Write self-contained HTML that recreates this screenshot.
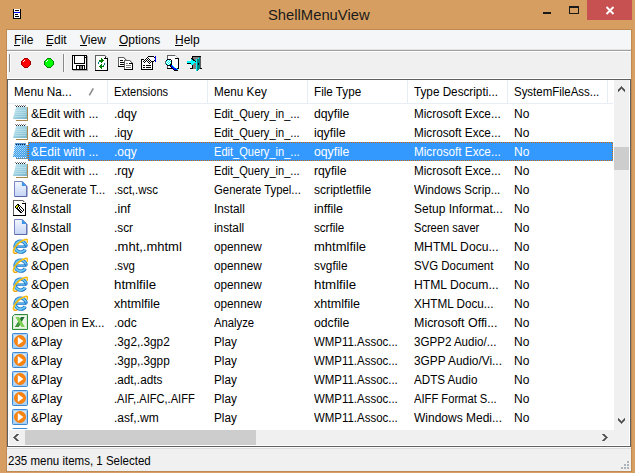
<!DOCTYPE html><html><head><meta charset="utf-8"><style>
*{margin:0;padding:0;box-sizing:border-box}
html,body{width:635px;height:473px;overflow:hidden;background:#D69F61;font-family:"Liberation Sans",sans-serif;font-size:12px;color:#000}
.a{position:absolute}
.t{position:absolute;white-space:pre;line-height:19px;height:19px;transform-origin:0 0}
svg{position:absolute;overflow:visible}
</style></head><body>

<div class="a" style="left:6px;top:29px;width:626px;height:443px;border:1px solid #BF8B52"></div>
<div class="a" style="left:268px;top:5px;font-size:15px;line-height:20px;color:#1a1a1a;white-space:pre;transform:scaleX(0.985);transform-origin:0 0">ShellMenuView</div>
<div class="a" style="left:543px;top:12px;width:8px;height:2px;background:#1a1a1a"></div>
<div class="a" style="left:569px;top:6px;width:10px;height:8px;border:1px solid #1a1a1a;border-top-width:2px"></div>
<div class="a" style="left:587px;top:0px;width:45px;height:20px;background:#C75050"></div>
<svg class="a" style="left:605px;top:6px" width="10" height="9"><path d="M1.5 1 L8.5 8 M8.5 1 L1.5 8" stroke="#fff" stroke-width="1.9"/></svg>
<div class="a" style="left:7px;top:30px;width:624px;height:441px;background:#F0F0F0"></div>
<div class="a" style="left:7px;top:30px;width:624px;height:19px;background:#F5F6F7"></div>
<div class="a" style="left:7px;top:49px;width:624px;height:1px;background:#E3E3E3"></div>
<div class="a" style="left:7px;top:50px;width:624px;height:1px;background:#A0A0A0"></div>
<div class="a" style="left:7px;top:51px;width:624px;height:1px;background:#FFFFFF"></div>
<span class="t" style="left:14px;top:31px;line-height:19px">File</span>
<div class="a" style="left:14px;top:45px;width:6px;height:1px;background:#000"></div>
<span class="t" style="left:46px;top:31px;line-height:19px">Edit</span>
<div class="a" style="left:46px;top:45px;width:6px;height:1px;background:#000"></div>
<span class="t" style="left:80px;top:31px;line-height:19px">View</span>
<div class="a" style="left:80px;top:45px;width:7px;height:1px;background:#000"></div>
<span class="t" style="left:119px;top:31px;line-height:19px">Options</span>
<div class="a" style="left:119px;top:45px;width:8px;height:1px;background:#000"></div>
<span class="t" style="left:175px;top:31px;line-height:19px">Help</span>
<div class="a" style="left:175px;top:45px;width:8px;height:1px;background:#000"></div>
<div class="a" style="left:7px;top:78px;width:624px;height:1px;background:#FFFFFF"></div>
<div class="a" style="left:7px;top:51px;width:1px;height:28px;background:#FFFFFF"></div>
<div class="a" style="left:9px;top:54px;width:1px;height:18px;background:#8A8A8A"></div>
<div class="a" style="left:10px;top:54px;width:1px;height:18px;background:#FAFAFA"></div>
<div class="a" style="left:63px;top:54px;width:1px;height:18px;background:#8A8A8A"></div>
<div class="a" style="left:64px;top:54px;width:1px;height:18px;background:#FAFAFA"></div>
<svg class="a" style="left:0;top:0" width="635" height="473" shape-rendering="crispEdges"><rect x="13" y="9" width="1" height="1" fill="#000000"/><rect x="14" y="9" width="6" height="1" fill="#FFFFFF"/><rect x="20" y="9" width="1" height="1" fill="#000000"/><rect x="13" y="10" width="1" height="1" fill="#000000"/><rect x="14" y="10" width="1" height="1" fill="#FFFFFF"/><rect x="15" y="10" width="4" height="1" fill="#000000"/><rect x="19" y="10" width="1" height="1" fill="#FFFFFF"/><rect x="20" y="10" width="1" height="1" fill="#000000"/><rect x="13" y="11" width="1" height="1" fill="#000000"/><rect x="14" y="11" width="6" height="1" fill="#FFFFFF"/><rect x="20" y="11" width="1" height="1" fill="#000000"/><rect x="13" y="12" width="1" height="1" fill="#000000"/><rect x="14" y="12" width="6" height="1" fill="#0000FF"/><rect x="20" y="12" width="1" height="1" fill="#000000"/><rect x="13" y="13" width="1" height="1" fill="#000000"/><rect x="14" y="13" width="6" height="1" fill="#FFFFFF"/><rect x="20" y="13" width="1" height="1" fill="#000000"/><rect x="13" y="14" width="1" height="1" fill="#000000"/><rect x="14" y="14" width="1" height="1" fill="#FFFFFF"/><rect x="15" y="14" width="3" height="1" fill="#000000"/><rect x="18" y="14" width="2" height="1" fill="#FFFFFF"/><rect x="20" y="14" width="1" height="1" fill="#000000"/><rect x="13" y="15" width="1" height="1" fill="#000000"/><rect x="14" y="15" width="6" height="1" fill="#FFFFFF"/><rect x="20" y="15" width="1" height="1" fill="#000000"/><rect x="13" y="16" width="1" height="1" fill="#000000"/><rect x="14" y="16" width="1" height="1" fill="#FFFFFF"/><rect x="15" y="16" width="4" height="1" fill="#000000"/><rect x="19" y="16" width="1" height="1" fill="#FFFFFF"/><rect x="20" y="16" width="1" height="1" fill="#000000"/><rect x="13" y="17" width="1" height="1" fill="#000000"/><rect x="14" y="17" width="6" height="1" fill="#FFFFFF"/><rect x="20" y="17" width="1" height="1" fill="#000000"/><rect x="13" y="18" width="8" height="1" fill="#000000"/><rect x="24" y="58" width="4" height="1" fill="#A00000"/><rect x="23" y="59" width="1" height="1" fill="#A00000"/><rect x="24" y="59" width="4" height="1" fill="#FF0000"/><rect x="28" y="59" width="1" height="1" fill="#A00000"/><rect x="22" y="60" width="1" height="1" fill="#A00000"/><rect x="23" y="60" width="1" height="1" fill="#FF0000"/><rect x="24" y="60" width="1" height="1" fill="#FFFFFF"/><rect x="25" y="60" width="4" height="1" fill="#FF0000"/><rect x="29" y="60" width="1" height="1" fill="#A00000"/><rect x="21" y="61" width="1" height="1" fill="#A00000"/><rect x="22" y="61" width="1" height="1" fill="#FF0000"/><rect x="23" y="61" width="1" height="1" fill="#FFFFFF"/><rect x="24" y="61" width="6" height="1" fill="#FF0000"/><rect x="30" y="61" width="1" height="1" fill="#A00000"/><rect x="21" y="62" width="1" height="1" fill="#A00000"/><rect x="22" y="62" width="8" height="1" fill="#FF0000"/><rect x="30" y="62" width="1" height="1" fill="#A00000"/><rect x="21" y="63" width="1" height="1" fill="#A00000"/><rect x="22" y="63" width="8" height="1" fill="#FF0000"/><rect x="30" y="63" width="1" height="1" fill="#A00000"/><rect x="21" y="64" width="1" height="1" fill="#A00000"/><rect x="22" y="64" width="8" height="1" fill="#FF0000"/><rect x="30" y="64" width="1" height="1" fill="#A00000"/><rect x="22" y="65" width="1" height="1" fill="#A00000"/><rect x="23" y="65" width="6" height="1" fill="#FF0000"/><rect x="29" y="65" width="1" height="1" fill="#A00000"/><rect x="23" y="66" width="1" height="1" fill="#A00000"/><rect x="24" y="66" width="4" height="1" fill="#FF0000"/><rect x="28" y="66" width="1" height="1" fill="#A00000"/><rect x="24" y="67" width="4" height="1" fill="#A00000"/><rect x="47" y="58" width="4" height="1" fill="#008000"/><rect x="46" y="59" width="1" height="1" fill="#008000"/><rect x="47" y="59" width="4" height="1" fill="#00FF00"/><rect x="51" y="59" width="1" height="1" fill="#008000"/><rect x="45" y="60" width="1" height="1" fill="#008000"/><rect x="46" y="60" width="1" height="1" fill="#00FF00"/><rect x="47" y="60" width="1" height="1" fill="#FFFFFF"/><rect x="48" y="60" width="4" height="1" fill="#00FF00"/><rect x="52" y="60" width="1" height="1" fill="#008000"/><rect x="44" y="61" width="1" height="1" fill="#008000"/><rect x="45" y="61" width="1" height="1" fill="#00FF00"/><rect x="46" y="61" width="1" height="1" fill="#FFFFFF"/><rect x="47" y="61" width="6" height="1" fill="#00FF00"/><rect x="53" y="61" width="1" height="1" fill="#008000"/><rect x="44" y="62" width="1" height="1" fill="#008000"/><rect x="45" y="62" width="8" height="1" fill="#00FF00"/><rect x="53" y="62" width="1" height="1" fill="#008000"/><rect x="44" y="63" width="1" height="1" fill="#008000"/><rect x="45" y="63" width="8" height="1" fill="#00FF00"/><rect x="53" y="63" width="1" height="1" fill="#008000"/><rect x="44" y="64" width="1" height="1" fill="#008000"/><rect x="45" y="64" width="8" height="1" fill="#00FF00"/><rect x="53" y="64" width="1" height="1" fill="#008000"/><rect x="45" y="65" width="1" height="1" fill="#008000"/><rect x="46" y="65" width="6" height="1" fill="#00FF00"/><rect x="52" y="65" width="1" height="1" fill="#008000"/><rect x="46" y="66" width="1" height="1" fill="#008000"/><rect x="47" y="66" width="4" height="1" fill="#00FF00"/><rect x="51" y="66" width="1" height="1" fill="#008000"/><rect x="47" y="67" width="4" height="1" fill="#008000"/><rect x="72" y="55" width="15" height="1" fill="#000000"/><rect x="72" y="56" width="1" height="1" fill="#000000"/><rect x="73" y="56" width="1" height="1" fill="#FFFFFF"/><rect x="74" y="56" width="1" height="1" fill="#000000"/><rect x="75" y="56" width="9" height="1" fill="#FFFFFF"/><rect x="84" y="56" width="1" height="1" fill="#000000"/><rect x="85" y="56" width="1" height="1" fill="#FFFFFF"/><rect x="86" y="56" width="1" height="1" fill="#000000"/><rect x="87" y="56" width="1" height="1" fill="#A8A8A8"/><rect x="72" y="57" width="1" height="1" fill="#000000"/><rect x="73" y="57" width="1" height="1" fill="#FFFFFF"/><rect x="74" y="57" width="1" height="1" fill="#000000"/><rect x="75" y="57" width="9" height="1" fill="#FFFFFF"/><rect x="84" y="57" width="3" height="1" fill="#000000"/><rect x="87" y="57" width="1" height="1" fill="#A8A8A8"/><rect x="72" y="58" width="1" height="1" fill="#000000"/><rect x="73" y="58" width="1" height="1" fill="#FFFFFF"/><rect x="74" y="58" width="1" height="1" fill="#000000"/><rect x="75" y="58" width="9" height="1" fill="#FFFFFF"/><rect x="84" y="58" width="1" height="1" fill="#000000"/><rect x="85" y="58" width="1" height="1" fill="#FFFFFF"/><rect x="86" y="58" width="1" height="1" fill="#000000"/><rect x="87" y="58" width="1" height="1" fill="#A8A8A8"/><rect x="72" y="59" width="1" height="1" fill="#000000"/><rect x="73" y="59" width="1" height="1" fill="#FFFFFF"/><rect x="74" y="59" width="1" height="1" fill="#000000"/><rect x="75" y="59" width="9" height="1" fill="#FFFFFF"/><rect x="84" y="59" width="1" height="1" fill="#000000"/><rect x="85" y="59" width="1" height="1" fill="#FFFFFF"/><rect x="86" y="59" width="1" height="1" fill="#000000"/><rect x="87" y="59" width="1" height="1" fill="#A8A8A8"/><rect x="72" y="60" width="1" height="1" fill="#000000"/><rect x="73" y="60" width="1" height="1" fill="#FFFFFF"/><rect x="74" y="60" width="1" height="1" fill="#000000"/><rect x="75" y="60" width="9" height="1" fill="#FFFFFF"/><rect x="84" y="60" width="1" height="1" fill="#000000"/><rect x="85" y="60" width="1" height="1" fill="#FFFFFF"/><rect x="86" y="60" width="1" height="1" fill="#000000"/><rect x="87" y="60" width="1" height="1" fill="#A8A8A8"/><rect x="72" y="61" width="1" height="1" fill="#000000"/><rect x="73" y="61" width="1" height="1" fill="#FFFFFF"/><rect x="74" y="61" width="1" height="1" fill="#000000"/><rect x="75" y="61" width="9" height="1" fill="#FFFFFF"/><rect x="84" y="61" width="1" height="1" fill="#000000"/><rect x="85" y="61" width="1" height="1" fill="#FFFFFF"/><rect x="86" y="61" width="1" height="1" fill="#000000"/><rect x="87" y="61" width="1" height="1" fill="#A8A8A8"/><rect x="72" y="62" width="1" height="1" fill="#000000"/><rect x="73" y="62" width="1" height="1" fill="#FFFFFF"/><rect x="74" y="62" width="1" height="1" fill="#000000"/><rect x="75" y="62" width="9" height="1" fill="#FFFFFF"/><rect x="84" y="62" width="1" height="1" fill="#000000"/><rect x="85" y="62" width="1" height="1" fill="#FFFFFF"/><rect x="86" y="62" width="1" height="1" fill="#000000"/><rect x="87" y="62" width="1" height="1" fill="#A8A8A8"/><rect x="72" y="63" width="1" height="1" fill="#000000"/><rect x="73" y="63" width="1" height="1" fill="#FFFFFF"/><rect x="74" y="63" width="11" height="1" fill="#000000"/><rect x="85" y="63" width="1" height="1" fill="#FFFFFF"/><rect x="86" y="63" width="1" height="1" fill="#000000"/><rect x="87" y="63" width="1" height="1" fill="#A8A8A8"/><rect x="72" y="64" width="1" height="1" fill="#000000"/><rect x="73" y="64" width="13" height="1" fill="#FFFFFF"/><rect x="86" y="64" width="1" height="1" fill="#000000"/><rect x="87" y="64" width="1" height="1" fill="#A8A8A8"/><rect x="72" y="65" width="1" height="1" fill="#000000"/><rect x="73" y="65" width="3" height="1" fill="#FFFFFF"/><rect x="76" y="65" width="9" height="1" fill="#000000"/><rect x="85" y="65" width="1" height="1" fill="#FFFFFF"/><rect x="86" y="65" width="1" height="1" fill="#000000"/><rect x="87" y="65" width="1" height="1" fill="#A8A8A8"/><rect x="72" y="66" width="1" height="1" fill="#000000"/><rect x="73" y="66" width="3" height="1" fill="#FFFFFF"/><rect x="76" y="66" width="1" height="1" fill="#000000"/><rect x="77" y="66" width="2" height="1" fill="#FFFFFF"/><rect x="79" y="66" width="1" height="1" fill="#000000"/><rect x="80" y="66" width="2" height="1" fill="#808080"/><rect x="82" y="66" width="1" height="1" fill="#000000"/><rect x="83" y="66" width="1" height="1" fill="#FFFFFF"/><rect x="84" y="66" width="1" height="1" fill="#000000"/><rect x="85" y="66" width="1" height="1" fill="#FFFFFF"/><rect x="86" y="66" width="1" height="1" fill="#000000"/><rect x="87" y="66" width="1" height="1" fill="#A8A8A8"/><rect x="72" y="67" width="1" height="1" fill="#000000"/><rect x="73" y="67" width="3" height="1" fill="#FFFFFF"/><rect x="76" y="67" width="1" height="1" fill="#000000"/><rect x="77" y="67" width="2" height="1" fill="#FFFFFF"/><rect x="79" y="67" width="1" height="1" fill="#000000"/><rect x="80" y="67" width="2" height="1" fill="#808080"/><rect x="82" y="67" width="1" height="1" fill="#000000"/><rect x="83" y="67" width="1" height="1" fill="#FFFFFF"/><rect x="84" y="67" width="1" height="1" fill="#000000"/><rect x="85" y="67" width="1" height="1" fill="#FFFFFF"/><rect x="86" y="67" width="1" height="1" fill="#000000"/><rect x="87" y="67" width="1" height="1" fill="#A8A8A8"/><rect x="72" y="68" width="1" height="1" fill="#000000"/><rect x="73" y="68" width="3" height="1" fill="#FFFFFF"/><rect x="76" y="68" width="1" height="1" fill="#000000"/><rect x="77" y="68" width="2" height="1" fill="#FFFFFF"/><rect x="79" y="68" width="1" height="1" fill="#000000"/><rect x="80" y="68" width="2" height="1" fill="#808080"/><rect x="82" y="68" width="1" height="1" fill="#000000"/><rect x="83" y="68" width="1" height="1" fill="#FFFFFF"/><rect x="84" y="68" width="1" height="1" fill="#000000"/><rect x="85" y="68" width="1" height="1" fill="#FFFFFF"/><rect x="86" y="68" width="1" height="1" fill="#000000"/><rect x="87" y="68" width="1" height="1" fill="#A8A8A8"/><rect x="72" y="69" width="15" height="1" fill="#000000"/><rect x="87" y="69" width="1" height="1" fill="#A8A8A8"/><rect x="73" y="70" width="15" height="1" fill="#A8A8A8"/><rect x="95" y="55" width="10" height="1" fill="#606060"/><rect x="105" y="55" width="1" height="1" fill="#C0C0C0"/><rect x="95" y="56" width="1" height="1" fill="#606060"/><rect x="96" y="56" width="9" height="1" fill="#FFFFFF"/><rect x="105" y="56" width="1" height="1" fill="#606060"/><rect x="106" y="56" width="1" height="1" fill="#C0C0C0"/><rect x="95" y="57" width="1" height="1" fill="#606060"/><rect x="96" y="57" width="9" height="1" fill="#FFFFFF"/><rect x="105" y="57" width="1" height="1" fill="#000000"/><rect x="106" y="57" width="1" height="1" fill="#FFFFFF"/><rect x="107" y="57" width="1" height="1" fill="#C0C0C0"/><rect x="95" y="58" width="1" height="1" fill="#606060"/><rect x="96" y="58" width="5" height="1" fill="#FFFFFF"/><rect x="101" y="58" width="1" height="1" fill="#008000"/><rect x="102" y="58" width="2" height="1" fill="#FFFFFF"/><rect x="104" y="58" width="4" height="1" fill="#000000"/><rect x="95" y="59" width="1" height="1" fill="#606060"/><rect x="96" y="59" width="5" height="1" fill="#FFFFFF"/><rect x="101" y="59" width="2" height="1" fill="#008000"/><rect x="103" y="59" width="4" height="1" fill="#FFFFFF"/><rect x="107" y="59" width="1" height="1" fill="#000000"/><rect x="95" y="60" width="1" height="1" fill="#606060"/><rect x="96" y="60" width="3" height="1" fill="#FFFFFF"/><rect x="99" y="60" width="5" height="1" fill="#008000"/><rect x="104" y="60" width="3" height="1" fill="#FFFFFF"/><rect x="107" y="60" width="1" height="1" fill="#000000"/><rect x="95" y="61" width="1" height="1" fill="#606060"/><rect x="96" y="61" width="3" height="1" fill="#FFFFFF"/><rect x="99" y="61" width="1" height="1" fill="#008080"/><rect x="100" y="61" width="3" height="1" fill="#008000"/><rect x="103" y="61" width="4" height="1" fill="#FFFFFF"/><rect x="107" y="61" width="1" height="1" fill="#000000"/><rect x="95" y="62" width="1" height="1" fill="#606060"/><rect x="96" y="62" width="2" height="1" fill="#FFFFFF"/><rect x="98" y="62" width="1" height="1" fill="#008080"/><rect x="99" y="62" width="2" height="1" fill="#FFFFFF"/><rect x="101" y="62" width="1" height="1" fill="#008000"/><rect x="102" y="62" width="5" height="1" fill="#FFFFFF"/><rect x="107" y="62" width="1" height="1" fill="#000000"/><rect x="95" y="63" width="1" height="1" fill="#606060"/><rect x="96" y="63" width="2" height="1" fill="#FFFFFF"/><rect x="98" y="63" width="1" height="1" fill="#008080"/><rect x="99" y="63" width="5" height="1" fill="#FFFFFF"/><rect x="104" y="63" width="1" height="1" fill="#008080"/><rect x="105" y="63" width="2" height="1" fill="#FFFFFF"/><rect x="107" y="63" width="1" height="1" fill="#000000"/><rect x="95" y="64" width="1" height="1" fill="#606060"/><rect x="96" y="64" width="5" height="1" fill="#FFFFFF"/><rect x="101" y="64" width="1" height="1" fill="#008000"/><rect x="102" y="64" width="2" height="1" fill="#FFFFFF"/><rect x="104" y="64" width="1" height="1" fill="#008080"/><rect x="105" y="64" width="2" height="1" fill="#FFFFFF"/><rect x="107" y="64" width="1" height="1" fill="#000000"/><rect x="95" y="65" width="1" height="1" fill="#606060"/><rect x="96" y="65" width="4" height="1" fill="#FFFFFF"/><rect x="100" y="65" width="2" height="1" fill="#008000"/><rect x="102" y="65" width="1" height="1" fill="#FFFFFF"/><rect x="103" y="65" width="1" height="1" fill="#008080"/><rect x="104" y="65" width="3" height="1" fill="#FFFFFF"/><rect x="107" y="65" width="1" height="1" fill="#000000"/><rect x="95" y="66" width="1" height="1" fill="#606060"/><rect x="96" y="66" width="3" height="1" fill="#FFFFFF"/><rect x="99" y="66" width="5" height="1" fill="#008000"/><rect x="104" y="66" width="3" height="1" fill="#FFFFFF"/><rect x="107" y="66" width="1" height="1" fill="#000000"/><rect x="95" y="67" width="1" height="1" fill="#606060"/><rect x="96" y="67" width="4" height="1" fill="#FFFFFF"/><rect x="100" y="67" width="2" height="1" fill="#008000"/><rect x="102" y="67" width="5" height="1" fill="#FFFFFF"/><rect x="107" y="67" width="1" height="1" fill="#000000"/><rect x="95" y="68" width="1" height="1" fill="#606060"/><rect x="96" y="68" width="5" height="1" fill="#FFFFFF"/><rect x="101" y="68" width="1" height="1" fill="#008000"/><rect x="102" y="68" width="5" height="1" fill="#FFFFFF"/><rect x="107" y="68" width="1" height="1" fill="#000000"/><rect x="95" y="69" width="1" height="1" fill="#606060"/><rect x="96" y="69" width="11" height="1" fill="#FFFFFF"/><rect x="107" y="69" width="1" height="1" fill="#000000"/><rect x="95" y="70" width="13" height="1" fill="#000000"/><rect x="118" y="57" width="6" height="1" fill="#606060"/><rect x="124" y="57" width="1" height="1" fill="#C0C0C0"/><rect x="118" y="58" width="1" height="1" fill="#606060"/><rect x="119" y="58" width="5" height="1" fill="#FFFFFF"/><rect x="124" y="58" width="1" height="1" fill="#606060"/><rect x="125" y="58" width="1" height="1" fill="#C0C0C0"/><rect x="118" y="59" width="1" height="1" fill="#606060"/><rect x="119" y="59" width="6" height="1" fill="#FFFFFF"/><rect x="125" y="59" width="1" height="1" fill="#606060"/><rect x="126" y="59" width="1" height="1" fill="#C0C0C0"/><rect x="118" y="60" width="1" height="1" fill="#606060"/><rect x="119" y="60" width="1" height="1" fill="#FFFFFF"/><rect x="120" y="60" width="3" height="1" fill="#000000"/><rect x="123" y="60" width="1" height="1" fill="#FFFFFF"/><rect x="124" y="60" width="6" height="1" fill="#606060"/><rect x="130" y="60" width="1" height="1" fill="#C0C0C0"/><rect x="118" y="61" width="1" height="1" fill="#606060"/><rect x="119" y="61" width="5" height="1" fill="#FFFFFF"/><rect x="124" y="61" width="1" height="1" fill="#606060"/><rect x="125" y="61" width="5" height="1" fill="#FFFFFF"/><rect x="130" y="61" width="1" height="1" fill="#606060"/><rect x="131" y="61" width="1" height="1" fill="#C0C0C0"/><rect x="118" y="62" width="1" height="1" fill="#606060"/><rect x="119" y="62" width="1" height="1" fill="#FFFFFF"/><rect x="120" y="62" width="4" height="1" fill="#000000"/><rect x="124" y="62" width="1" height="1" fill="#606060"/><rect x="125" y="62" width="6" height="1" fill="#FFFFFF"/><rect x="131" y="62" width="1" height="1" fill="#606060"/><rect x="132" y="62" width="1" height="1" fill="#C0C0C0"/><rect x="118" y="63" width="1" height="1" fill="#606060"/><rect x="119" y="63" width="5" height="1" fill="#FFFFFF"/><rect x="124" y="63" width="1" height="1" fill="#606060"/><rect x="125" y="63" width="1" height="1" fill="#FFFFFF"/><rect x="126" y="63" width="2" height="1" fill="#808080"/><rect x="128" y="63" width="1" height="1" fill="#FFFFFF"/><rect x="129" y="63" width="4" height="1" fill="#000000"/><rect x="118" y="64" width="1" height="1" fill="#606060"/><rect x="119" y="64" width="1" height="1" fill="#FFFFFF"/><rect x="120" y="64" width="4" height="1" fill="#000000"/><rect x="124" y="64" width="1" height="1" fill="#606060"/><rect x="125" y="64" width="7" height="1" fill="#FFFFFF"/><rect x="132" y="64" width="1" height="1" fill="#000000"/><rect x="118" y="65" width="1" height="1" fill="#606060"/><rect x="119" y="65" width="5" height="1" fill="#FFFFFF"/><rect x="124" y="65" width="1" height="1" fill="#606060"/><rect x="125" y="65" width="1" height="1" fill="#FFFFFF"/><rect x="126" y="65" width="5" height="1" fill="#808080"/><rect x="131" y="65" width="1" height="1" fill="#FFFFFF"/><rect x="132" y="65" width="1" height="1" fill="#000000"/><rect x="118" y="66" width="6" height="1" fill="#000000"/><rect x="124" y="66" width="1" height="1" fill="#606060"/><rect x="125" y="66" width="7" height="1" fill="#FFFFFF"/><rect x="132" y="66" width="1" height="1" fill="#000000"/><rect x="124" y="67" width="1" height="1" fill="#606060"/><rect x="125" y="67" width="1" height="1" fill="#FFFFFF"/><rect x="126" y="67" width="5" height="1" fill="#808080"/><rect x="131" y="67" width="1" height="1" fill="#FFFFFF"/><rect x="132" y="67" width="1" height="1" fill="#000000"/><rect x="124" y="68" width="1" height="1" fill="#606060"/><rect x="125" y="68" width="7" height="1" fill="#FFFFFF"/><rect x="132" y="68" width="1" height="1" fill="#000000"/><rect x="124" y="69" width="9" height="1" fill="#000000"/><rect x="148" y="56" width="6" height="1" fill="#000000"/><rect x="155" y="56" width="1" height="1" fill="#0000FF"/><rect x="146" y="57" width="1" height="1" fill="#FFFFFF"/><rect x="147" y="57" width="1" height="1" fill="#000000"/><rect x="148" y="57" width="6" height="1" fill="#FFFFFF"/><rect x="154" y="57" width="1" height="1" fill="#000000"/><rect x="155" y="57" width="1" height="1" fill="#0000FF"/><rect x="145" y="58" width="1" height="1" fill="#FFFFFF"/><rect x="146" y="58" width="1" height="1" fill="#000000"/><rect x="147" y="58" width="1" height="1" fill="#FFFFFF"/><rect x="148" y="58" width="1" height="1" fill="#000000"/><rect x="149" y="58" width="5" height="1" fill="#FFFFFF"/><rect x="155" y="58" width="1" height="1" fill="#0000FF"/><rect x="141" y="59" width="3" height="1" fill="#000000"/><rect x="144" y="59" width="1" height="1" fill="#FFFFFF"/><rect x="145" y="59" width="1" height="1" fill="#000000"/><rect x="146" y="59" width="1" height="1" fill="#FFFFFF"/><rect x="147" y="59" width="1" height="1" fill="#000000"/><rect x="148" y="59" width="1" height="1" fill="#FFFFFF"/><rect x="149" y="59" width="1" height="1" fill="#000000"/><rect x="150" y="59" width="4" height="1" fill="#FFFFFF"/><rect x="155" y="59" width="1" height="1" fill="#0000FF"/><rect x="141" y="60" width="1" height="1" fill="#000000"/><rect x="142" y="60" width="2" height="1" fill="#FFFFFF"/><rect x="144" y="60" width="1" height="1" fill="#000000"/><rect x="145" y="60" width="1" height="1" fill="#FFFFFF"/><rect x="146" y="60" width="1" height="1" fill="#000000"/><rect x="147" y="60" width="1" height="1" fill="#FFFFFF"/><rect x="148" y="60" width="1" height="1" fill="#000000"/><rect x="149" y="60" width="1" height="1" fill="#FFFFFF"/><rect x="150" y="60" width="1" height="1" fill="#000000"/><rect x="151" y="60" width="3" height="1" fill="#FFFFFF"/><rect x="154" y="60" width="1" height="1" fill="#000000"/><rect x="155" y="60" width="1" height="1" fill="#0000FF"/><rect x="141" y="61" width="1" height="1" fill="#000000"/><rect x="142" y="61" width="1" height="1" fill="#FFFFFF"/><rect x="143" y="61" width="1" height="1" fill="#000000"/><rect x="144" y="61" width="1" height="1" fill="#FFFFFF"/><rect x="145" y="61" width="1" height="1" fill="#000000"/><rect x="146" y="61" width="1" height="1" fill="#FFFFFF"/><rect x="147" y="61" width="1" height="1" fill="#000000"/><rect x="148" y="61" width="1" height="1" fill="#FFFFFF"/><rect x="149" y="61" width="1" height="1" fill="#000000"/><rect x="150" y="61" width="1" height="1" fill="#FFFFFF"/><rect x="151" y="61" width="3" height="1" fill="#000000"/><rect x="155" y="61" width="1" height="1" fill="#0000FF"/><rect x="141" y="62" width="1" height="1" fill="#000000"/><rect x="142" y="62" width="2" height="1" fill="#FFFFFF"/><rect x="144" y="62" width="1" height="1" fill="#000000"/><rect x="145" y="62" width="3" height="1" fill="#FFFFFF"/><rect x="148" y="62" width="1" height="1" fill="#000000"/><rect x="149" y="62" width="1" height="1" fill="#FFFFFF"/><rect x="150" y="62" width="1" height="1" fill="#000000"/><rect x="151" y="62" width="1" height="1" fill="#FFFFFF"/><rect x="152" y="62" width="1" height="1" fill="#000000"/><rect x="141" y="63" width="1" height="1" fill="#000000"/><rect x="142" y="63" width="7" height="1" fill="#FFFFFF"/><rect x="149" y="63" width="1" height="1" fill="#000000"/><rect x="150" y="63" width="2" height="1" fill="#FFFFFF"/><rect x="152" y="63" width="1" height="1" fill="#000000"/><rect x="141" y="64" width="1" height="1" fill="#000000"/><rect x="142" y="64" width="10" height="1" fill="#FFFFFF"/><rect x="152" y="64" width="1" height="1" fill="#000000"/><rect x="141" y="65" width="1" height="1" fill="#000000"/><rect x="142" y="65" width="1" height="1" fill="#FFFFFF"/><rect x="143" y="65" width="2" height="1" fill="#000000"/><rect x="145" y="65" width="1" height="1" fill="#FFFFFF"/><rect x="146" y="65" width="5" height="1" fill="#000000"/><rect x="151" y="65" width="1" height="1" fill="#FFFFFF"/><rect x="152" y="65" width="1" height="1" fill="#000000"/><rect x="141" y="66" width="1" height="1" fill="#000000"/><rect x="142" y="66" width="10" height="1" fill="#FFFFFF"/><rect x="152" y="66" width="1" height="1" fill="#000000"/><rect x="141" y="67" width="1" height="1" fill="#000000"/><rect x="142" y="67" width="1" height="1" fill="#FFFFFF"/><rect x="143" y="67" width="2" height="1" fill="#000000"/><rect x="145" y="67" width="1" height="1" fill="#FFFFFF"/><rect x="146" y="67" width="5" height="1" fill="#000000"/><rect x="151" y="67" width="1" height="1" fill="#FFFFFF"/><rect x="152" y="67" width="1" height="1" fill="#000000"/><rect x="141" y="68" width="1" height="1" fill="#000000"/><rect x="142" y="68" width="10" height="1" fill="#FFFFFF"/><rect x="152" y="68" width="1" height="1" fill="#000000"/><rect x="141" y="69" width="12" height="1" fill="#000000"/><rect x="167" y="55" width="8" height="1" fill="#606060"/><rect x="175" y="55" width="1" height="1" fill="#C0C0C0"/><rect x="167" y="56" width="1" height="1" fill="#606060"/><rect x="168" y="56" width="8" height="1" fill="#FFFFFF"/><rect x="176" y="56" width="1" height="1" fill="#C0C0C0"/><rect x="167" y="57" width="1" height="1" fill="#606060"/><rect x="168" y="57" width="9" height="1" fill="#FFFFFF"/><rect x="177" y="57" width="1" height="1" fill="#C0C0C0"/><rect x="167" y="58" width="1" height="1" fill="#606060"/><rect x="168" y="58" width="7" height="1" fill="#FFFFFF"/><rect x="175" y="58" width="4" height="1" fill="#000000"/><rect x="167" y="59" width="4" height="1" fill="#000000"/><rect x="171" y="59" width="7" height="1" fill="#FFFFFF"/><rect x="178" y="59" width="1" height="1" fill="#000000"/><rect x="166" y="60" width="1" height="1" fill="#000000"/><rect x="167" y="60" width="1" height="1" fill="#00FFFF"/><rect x="168" y="60" width="1" height="1" fill="#FFFFFF"/><rect x="169" y="60" width="1" height="1" fill="#00FFFF"/><rect x="170" y="60" width="1" height="1" fill="#FFFFFF"/><rect x="171" y="60" width="1" height="1" fill="#000000"/><rect x="172" y="60" width="6" height="1" fill="#FFFFFF"/><rect x="178" y="60" width="1" height="1" fill="#000000"/><rect x="165" y="61" width="1" height="1" fill="#606060"/><rect x="166" y="61" width="1" height="1" fill="#00FFFF"/><rect x="167" y="61" width="1" height="1" fill="#FFFFFF"/><rect x="168" y="61" width="1" height="1" fill="#00FFFF"/><rect x="169" y="61" width="1" height="1" fill="#FFFFFF"/><rect x="170" y="61" width="1" height="1" fill="#00FFFF"/><rect x="171" y="61" width="1" height="1" fill="#000000"/><rect x="172" y="61" width="6" height="1" fill="#FFFFFF"/><rect x="178" y="61" width="1" height="1" fill="#000000"/><rect x="165" y="62" width="1" height="1" fill="#606060"/><rect x="166" y="62" width="1" height="1" fill="#FFFFFF"/><rect x="167" y="62" width="1" height="1" fill="#00FFFF"/><rect x="168" y="62" width="1" height="1" fill="#FFFFFF"/><rect x="169" y="62" width="1" height="1" fill="#00FFFF"/><rect x="170" y="62" width="1" height="1" fill="#FFFFFF"/><rect x="171" y="62" width="1" height="1" fill="#000000"/><rect x="172" y="62" width="6" height="1" fill="#FFFFFF"/><rect x="178" y="62" width="1" height="1" fill="#000000"/><rect x="165" y="63" width="1" height="1" fill="#606060"/><rect x="166" y="63" width="1" height="1" fill="#00FFFF"/><rect x="167" y="63" width="1" height="1" fill="#FFFFFF"/><rect x="168" y="63" width="1" height="1" fill="#00FFFF"/><rect x="169" y="63" width="1" height="1" fill="#FFFFFF"/><rect x="170" y="63" width="1" height="1" fill="#00FFFF"/><rect x="171" y="63" width="1" height="1" fill="#000000"/><rect x="172" y="63" width="6" height="1" fill="#FFFFFF"/><rect x="178" y="63" width="1" height="1" fill="#000000"/><rect x="166" y="64" width="1" height="1" fill="#000000"/><rect x="167" y="64" width="1" height="1" fill="#00FFFF"/><rect x="168" y="64" width="1" height="1" fill="#FFFFFF"/><rect x="169" y="64" width="1" height="1" fill="#00FFFF"/><rect x="170" y="64" width="2" height="1" fill="#000000"/><rect x="172" y="64" width="6" height="1" fill="#FFFFFF"/><rect x="178" y="64" width="1" height="1" fill="#000000"/><rect x="167" y="65" width="4" height="1" fill="#000000"/><rect x="171" y="65" width="1" height="1" fill="#0000FF"/><rect x="172" y="65" width="1" height="1" fill="#00FFFF"/><rect x="173" y="65" width="5" height="1" fill="#FFFFFF"/><rect x="178" y="65" width="1" height="1" fill="#000000"/><rect x="167" y="66" width="1" height="1" fill="#606060"/><rect x="168" y="66" width="2" height="1" fill="#FFFFFF"/><rect x="170" y="66" width="1" height="1" fill="#000000"/><rect x="171" y="66" width="2" height="1" fill="#0000FF"/><rect x="173" y="66" width="1" height="1" fill="#00FFFF"/><rect x="174" y="66" width="4" height="1" fill="#FFFFFF"/><rect x="178" y="66" width="1" height="1" fill="#000000"/><rect x="167" y="67" width="1" height="1" fill="#606060"/><rect x="168" y="67" width="3" height="1" fill="#FFFFFF"/><rect x="171" y="67" width="1" height="1" fill="#000000"/><rect x="172" y="67" width="2" height="1" fill="#0000FF"/><rect x="174" y="67" width="1" height="1" fill="#00FFFF"/><rect x="175" y="67" width="3" height="1" fill="#FFFFFF"/><rect x="178" y="67" width="1" height="1" fill="#000000"/><rect x="167" y="68" width="6" height="1" fill="#000000"/><rect x="173" y="68" width="3" height="1" fill="#0000FF"/><rect x="176" y="68" width="1" height="1" fill="#00FFFF"/><rect x="177" y="68" width="2" height="1" fill="#000000"/><rect x="173" y="69" width="1" height="1" fill="#000000"/><rect x="174" y="69" width="3" height="1" fill="#0000FF"/><rect x="177" y="69" width="1" height="1" fill="#00FFFF"/><rect x="174" y="70" width="4" height="1" fill="#000000"/><rect x="192" y="56" width="9" height="1" fill="#000000"/><rect x="192" y="57" width="1" height="1" fill="#000000"/><rect x="193" y="57" width="6" height="1" fill="#808080"/><rect x="199" y="57" width="1" height="1" fill="#008080"/><rect x="200" y="57" width="1" height="1" fill="#606060"/><rect x="191" y="58" width="2" height="1" fill="#000000"/><rect x="193" y="58" width="5" height="1" fill="#808080"/><rect x="198" y="58" width="1" height="1" fill="#00FFFF"/><rect x="199" y="58" width="1" height="1" fill="#008080"/><rect x="200" y="58" width="1" height="1" fill="#606060"/><rect x="191" y="59" width="1" height="1" fill="#00FFFF"/><rect x="192" y="59" width="2" height="1" fill="#000000"/><rect x="194" y="59" width="2" height="1" fill="#808080"/><rect x="196" y="59" width="1" height="1" fill="#00FFFF"/><rect x="197" y="59" width="3" height="1" fill="#008080"/><rect x="200" y="59" width="1" height="1" fill="#606060"/><rect x="191" y="60" width="2" height="1" fill="#00FFFF"/><rect x="193" y="60" width="2" height="1" fill="#000000"/><rect x="195" y="60" width="1" height="1" fill="#808080"/><rect x="196" y="60" width="1" height="1" fill="#00FFFF"/><rect x="197" y="60" width="3" height="1" fill="#008080"/><rect x="200" y="60" width="1" height="1" fill="#606060"/><rect x="187" y="61" width="8" height="1" fill="#00FFFF"/><rect x="195" y="61" width="1" height="1" fill="#000000"/><rect x="196" y="61" width="1" height="1" fill="#00FFFF"/><rect x="197" y="61" width="3" height="1" fill="#008080"/><rect x="200" y="61" width="1" height="1" fill="#606060"/><rect x="187" y="62" width="10" height="1" fill="#00FFFF"/><rect x="197" y="62" width="3" height="1" fill="#008080"/><rect x="200" y="62" width="1" height="1" fill="#606060"/><rect x="187" y="63" width="4" height="1" fill="#000000"/><rect x="191" y="63" width="3" height="1" fill="#00FFFF"/><rect x="194" y="63" width="2" height="1" fill="#808080"/><rect x="196" y="63" width="1" height="1" fill="#00FFFF"/><rect x="197" y="63" width="1" height="1" fill="#008080"/><rect x="198" y="63" width="1" height="1" fill="#000000"/><rect x="199" y="63" width="1" height="1" fill="#008080"/><rect x="200" y="63" width="1" height="1" fill="#606060"/><rect x="191" y="64" width="2" height="1" fill="#00FFFF"/><rect x="193" y="64" width="3" height="1" fill="#808080"/><rect x="196" y="64" width="1" height="1" fill="#00FFFF"/><rect x="197" y="64" width="1" height="1" fill="#008080"/><rect x="198" y="64" width="1" height="1" fill="#000000"/><rect x="199" y="64" width="1" height="1" fill="#008080"/><rect x="200" y="64" width="1" height="1" fill="#606060"/><rect x="192" y="65" width="1" height="1" fill="#000000"/><rect x="193" y="65" width="3" height="1" fill="#808080"/><rect x="196" y="65" width="1" height="1" fill="#00FFFF"/><rect x="197" y="65" width="3" height="1" fill="#008080"/><rect x="200" y="65" width="1" height="1" fill="#606060"/><rect x="192" y="66" width="1" height="1" fill="#000000"/><rect x="193" y="66" width="3" height="1" fill="#808080"/><rect x="196" y="66" width="1" height="1" fill="#00FFFF"/><rect x="197" y="66" width="3" height="1" fill="#008080"/><rect x="200" y="66" width="1" height="1" fill="#606060"/><rect x="192" y="67" width="1" height="1" fill="#000000"/><rect x="193" y="67" width="3" height="1" fill="#808080"/><rect x="196" y="67" width="1" height="1" fill="#00FFFF"/><rect x="197" y="67" width="3" height="1" fill="#008080"/><rect x="200" y="67" width="1" height="1" fill="#606060"/><rect x="190" y="68" width="3" height="1" fill="#000000"/><rect x="193" y="68" width="3" height="1" fill="#808080"/><rect x="196" y="68" width="1" height="1" fill="#00FFFF"/><rect x="197" y="68" width="3" height="1" fill="#008080"/><rect x="200" y="68" width="2" height="1" fill="#000000"/><rect x="196" y="69" width="1" height="1" fill="#00FFFF"/><rect x="197" y="69" width="2" height="1" fill="#008080"/><rect x="196" y="70" width="1" height="1" fill="#00FFFF"/><rect x="197" y="70" width="1" height="1" fill="#008080"/></svg>
<div class="a" style="left:7px;top:79px;width:624px;height:368px;border:1px solid #5F5F5F;background:#fff"></div>
<span class="t" style="left:14px;top:83px;transform:scaleX(0.9825);">Menu Na...</span>
<div class="a" style="left:107px;top:80px;width:1px;height:23px;background:#E8ECF5"></div>
<span class="t" style="left:114px;top:83px;transform:scaleX(0.9224);">Extensions</span>
<div class="a" style="left:207px;top:80px;width:1px;height:23px;background:#E8ECF5"></div>
<span class="t" style="left:214px;top:83px;transform:scaleX(0.9774);">Menu Key</span>
<div class="a" style="left:307px;top:80px;width:1px;height:23px;background:#E8ECF5"></div>
<span class="t" style="left:314px;top:83px;transform:scaleX(0.9723);">File Type</span>
<div class="a" style="left:407px;top:80px;width:1px;height:23px;background:#E8ECF5"></div>
<span class="t" style="left:414px;top:83px;transform:scaleX(0.9765);">Type Descripti...</span>
<div class="a" style="left:507px;top:80px;width:1px;height:23px;background:#E8ECF5"></div>
<span class="t" style="left:514px;top:83px;transform:scaleX(0.9545);">SystemFileAss...</span>
<div class="a" style="left:607px;top:80px;width:1px;height:23px;background:#E8ECF5"></div>
<div class="a" style="left:8px;top:103px;width:605px;height:1px;background:#E9EDF5"></div>
<svg class="a" style="left:88px;top:87px" width="8" height="10"><path d="M1.3 8.3 L5.3 1.3" stroke="#8c8c8c" stroke-width="1.6"/></svg>
<svg class="a" style="left:12px;top:105px" width="16" height="16"><use href="#i_np"/></svg>
<span class="t" style="left:31px;top:105px;transform:scaleX(1.0121);">&amp;Edit with ...</span>
<span class="t" style="left:114px;top:105px;">.dqy</span>
<span class="t" style="left:214px;top:105px;transform:scaleX(0.9231);">Edit_Query_in_...</span>
<span class="t" style="left:314px;top:105px;transform:scaleX(1.0200);">dqyfile</span>
<span class="t" style="left:414px;top:105px;transform:scaleX(0.9770);">Microsoft Exce...</span>
<span class="t" style="left:514px;top:105px;">No</span>
<svg class="a" style="left:12px;top:124px" width="16" height="16"><use href="#i_np"/></svg>
<span class="t" style="left:31px;top:124px;transform:scaleX(1.0121);">&amp;Edit with ...</span>
<span class="t" style="left:114px;top:124px;">.iqy</span>
<span class="t" style="left:214px;top:124px;transform:scaleX(0.9231);">Edit_Query_in_...</span>
<span class="t" style="left:314px;top:124px;transform:scaleX(1.0290);">iqyfile</span>
<span class="t" style="left:414px;top:124px;transform:scaleX(0.9770);">Microsoft Exce...</span>
<span class="t" style="left:514px;top:124px;">No</span>
<div class="a" style="left:28px;top:142px;width:585px;height:19px;background:#3399FF"></div>
<svg class="a" style="left:0;top:0" width="635" height="473" shape-rendering="crispEdges"><defs><pattern id="foc" width="2" height="2" patternUnits="userSpaceOnUse"><rect x="1" y="0" width="1" height="1" fill="#CC6600"/><rect x="0" y="1" width="1" height="1" fill="#CC6600"/></pattern></defs><rect x="28" y="142" width="585" height="1" fill="url(#foc)"/><rect x="28" y="160" width="585" height="1" fill="url(#foc)"/><rect x="28" y="142" width="1" height="19" fill="url(#foc)"/><rect x="612" y="142" width="1" height="19" fill="url(#foc)"/></svg>
<svg class="a" style="left:12px;top:143px" width="16" height="16"><use href="#i_np"/></svg>
<svg class="a" style="left:12px;top:143px" width="16" height="16"><path d="M3 0 H14 V2 H16 V16 H4 V14 H1 Z" fill="url(#dith)"/></svg>
<span class="t" style="left:31px;top:143px;transform:scaleX(1.0121); color:#fff;">&amp;Edit with ...</span>
<span class="t" style="left:114px;top:143px; color:#fff;">.oqy</span>
<span class="t" style="left:214px;top:143px;transform:scaleX(0.9231); color:#fff;">Edit_Query_in_...</span>
<span class="t" style="left:314px;top:143px;transform:scaleX(1.0200); color:#fff;">oqyfile</span>
<span class="t" style="left:414px;top:143px;transform:scaleX(0.9770); color:#fff;">Microsoft Exce...</span>
<span class="t" style="left:514px;top:143px; color:#fff;">No</span>
<svg class="a" style="left:12px;top:162px" width="16" height="16"><use href="#i_np"/></svg>
<span class="t" style="left:31px;top:162px;transform:scaleX(1.0121);">&amp;Edit with ...</span>
<span class="t" style="left:114px;top:162px;">.rqy</span>
<span class="t" style="left:214px;top:162px;transform:scaleX(0.9231);">Edit_Query_in_...</span>
<span class="t" style="left:314px;top:162px;transform:scaleX(1.0156);">rqyfile</span>
<span class="t" style="left:414px;top:162px;transform:scaleX(0.9770);">Microsoft Exce...</span>
<span class="t" style="left:514px;top:162px;">No</span>
<svg class="a" style="left:12px;top:181px" width="16" height="16"><use href="#i_doc"/></svg>
<span class="t" style="left:31px;top:181px;transform:scaleX(0.9605);">&amp;Generate T...</span>
<span class="t" style="left:114px;top:181px;transform:scaleX(0.9556);">.sct,.wsc</span>
<span class="t" style="left:214px;top:181px;transform:scaleX(0.9451);">Generate Typel...</span>
<span class="t" style="left:314px;top:181px;transform:scaleX(1.0088);">scriptletfile</span>
<span class="t" style="left:414px;top:181px;transform:scaleX(0.9663);">Windows Scrip...</span>
<span class="t" style="left:514px;top:181px;">No</span>
<svg class="a" style="left:12px;top:200px" width="16" height="16"><use href="#i_inf"/></svg>
<span class="t" style="left:31px;top:200px;transform:scaleX(1.0256);">&amp;Install</span>
<span class="t" style="left:114px;top:200px;transform:scaleX(1.0312);">.inf</span>
<span class="t" style="left:214px;top:200px;transform:scaleX(0.9833);">Install</span>
<span class="t" style="left:314px;top:200px;transform:scaleX(1.0464);">inffile</span>
<span class="t" style="left:414px;top:200px;">Setup Informat...</span>
<span class="t" style="left:514px;top:200px;">No</span>
<svg class="a" style="left:12px;top:219px" width="16" height="16"><use href="#i_doc"/></svg>
<span class="t" style="left:31px;top:219px;transform:scaleX(1.0256);">&amp;Install</span>
<span class="t" style="left:114px;top:219px;transform:scaleX(0.9833);">.scr</span>
<span class="t" style="left:214px;top:219px;transform:scaleX(0.9833);">install</span>
<span class="t" style="left:314px;top:219px;transform:scaleX(0.9677);">scrfile</span>
<span class="t" style="left:414px;top:219px;transform:scaleX(0.9229);">Screen saver</span>
<span class="t" style="left:514px;top:219px;">No</span>
<svg class="a" style="left:12px;top:238px" width="16" height="16"><use href="#i_ie"/></svg>
<span class="t" style="left:31px;top:238px;transform:scaleX(1.0189);">&amp;Open</span>
<span class="t" style="left:114px;top:238px;transform:scaleX(1.0820);">.mht,.mhtml</span>
<span class="t" style="left:214px;top:238px;transform:scaleX(0.9796);">opennew</span>
<span class="t" style="left:314px;top:238px;transform:scaleX(1.0851);">mhtmlfile</span>
<span class="t" style="left:414px;top:238px;transform:scaleX(1.0122);">MHTML Docu...</span>
<span class="t" style="left:514px;top:238px;">No</span>
<svg class="a" style="left:12px;top:257px" width="16" height="16"><use href="#i_ie"/></svg>
<span class="t" style="left:31px;top:257px;transform:scaleX(1.0189);">&amp;Open</span>
<span class="t" style="left:114px;top:257px;transform:scaleX(0.9524);">.svg</span>
<span class="t" style="left:214px;top:257px;transform:scaleX(0.9796);">opennew</span>
<span class="t" style="left:314px;top:257px;transform:scaleX(0.9853);">svgfile</span>
<span class="t" style="left:414px;top:257px;transform:scaleX(0.9518);">SVG Document</span>
<span class="t" style="left:514px;top:257px;">No</span>
<svg class="a" style="left:12px;top:276px" width="16" height="16"><use href="#i_ie"/></svg>
<span class="t" style="left:31px;top:276px;transform:scaleX(1.0189);">&amp;Open</span>
<span class="t" style="left:114px;top:276px;transform:scaleX(1.1081);">htmlfile</span>
<span class="t" style="left:214px;top:276px;transform:scaleX(0.9796);">opennew</span>
<span class="t" style="left:314px;top:276px;transform:scaleX(1.1081);">htmlfile</span>
<span class="t" style="left:414px;top:276px;transform:scaleX(1.0122);">HTML Docum...</span>
<span class="t" style="left:514px;top:276px;">No</span>
<svg class="a" style="left:12px;top:295px" width="16" height="16"><use href="#i_ie"/></svg>
<span class="t" style="left:31px;top:295px;transform:scaleX(1.0189);">&amp;Open</span>
<span class="t" style="left:114px;top:295px;transform:scaleX(1.0455);">xhtmlfile</span>
<span class="t" style="left:214px;top:295px;transform:scaleX(0.9796);">opennew</span>
<span class="t" style="left:314px;top:295px;transform:scaleX(1.0455);">xhtmlfile</span>
<span class="t" style="left:414px;top:295px;transform:scaleX(0.9753);">XHTML Docu...</span>
<span class="t" style="left:514px;top:295px;">No</span>
<svg class="a" style="left:12px;top:314px" width="16" height="16"><use href="#i_xl"/></svg>
<span class="t" style="left:31px;top:314px;transform:scaleX(0.9481);">&amp;Open in Ex...</span>
<span class="t" style="left:114px;top:314px;">.odc</span>
<span class="t" style="left:214px;top:314px;transform:scaleX(0.9395);">Analyze</span>
<span class="t" style="left:314px;top:314px;transform:scaleX(1.0200);">odcfile</span>
<span class="t" style="left:414px;top:314px;transform:scaleX(1.0380);">Microsoft Offi...</span>
<span class="t" style="left:514px;top:314px;">No</span>
<svg class="a" style="left:12px;top:333px" width="16" height="16"><use href="#i_wmp"/></svg>
<span class="t" style="left:31px;top:333px;">&amp;Play</span>
<span class="t" style="left:114px;top:333px;transform:scaleX(0.9818);">.3g2,.3gp2</span>
<span class="t" style="left:214px;top:333px;transform:scaleX(0.9773);">Play</span>
<span class="t" style="left:314px;top:333px;transform:scaleX(0.9540);">WMP11.Assoc...</span>
<span class="t" style="left:414px;top:333px;transform:scaleX(0.9647);">3GPP2 Audio/...</span>
<span class="t" style="left:514px;top:333px;">No</span>
<svg class="a" style="left:12px;top:352px" width="16" height="16"><use href="#i_wmp"/></svg>
<span class="t" style="left:31px;top:352px;">&amp;Play</span>
<span class="t" style="left:114px;top:352px;transform:scaleX(0.9821);">.3gp,.3gpp</span>
<span class="t" style="left:214px;top:352px;transform:scaleX(0.9773);">Play</span>
<span class="t" style="left:314px;top:352px;transform:scaleX(0.9540);">WMP11.Assoc...</span>
<span class="t" style="left:414px;top:352px;transform:scaleX(0.9886);">3GPP Audio/Vi...</span>
<span class="t" style="left:514px;top:352px;">No</span>
<svg class="a" style="left:12px;top:371px" width="16" height="16"><use href="#i_wmp"/></svg>
<span class="t" style="left:31px;top:371px;">&amp;Play</span>
<span class="t" style="left:114px;top:371px;transform:scaleX(0.9792);">.adt,.adts</span>
<span class="t" style="left:214px;top:371px;transform:scaleX(0.9773);">Play</span>
<span class="t" style="left:314px;top:371px;transform:scaleX(0.9540);">WMP11.Assoc...</span>
<span class="t" style="left:414px;top:371px;transform:scaleX(0.9692);">ADTS Audio</span>
<span class="t" style="left:514px;top:371px;">No</span>
<svg class="a" style="left:12px;top:390px" width="16" height="16"><use href="#i_wmp"/></svg>
<span class="t" style="left:31px;top:390px;">&amp;Play</span>
<span class="t" style="left:114px;top:390px;transform:scaleX(0.9244);">.AIF,.AIFC,.AIFF</span>
<span class="t" style="left:214px;top:390px;transform:scaleX(0.9773);">Play</span>
<span class="t" style="left:314px;top:390px;transform:scaleX(0.9540);">WMP11.Assoc...</span>
<span class="t" style="left:414px;top:390px;transform:scaleX(0.9318);">AIFF Format S...</span>
<span class="t" style="left:514px;top:390px;">No</span>
<svg class="a" style="left:12px;top:409px" width="16" height="16"><use href="#i_wmp"/></svg>
<span class="t" style="left:31px;top:409px;">&amp;Play</span>
<span class="t" style="left:114px;top:409px;">.asf,.wm</span>
<span class="t" style="left:214px;top:409px;transform:scaleX(0.9773);">Play</span>
<span class="t" style="left:314px;top:409px;transform:scaleX(0.9540);">WMP11.Assoc...</span>
<span class="t" style="left:414px;top:409px;">Windows Medi...</span>
<span class="t" style="left:514px;top:409px;">No</span>
<svg class="a" style="left:12px;top:428px" width="16" height="16"><use href="#i_wmp"/></svg>






<div class="a" style="left:613px;top:80px;width:17px;height:350px;background:#F0F0F0;border-left:1px solid #fff;border-right:1px solid #fff"></div>
<div class="a" style="left:614px;top:147px;width:15px;height:23px;background:#CDCDCD"></div>
<div class="a" style="left:8px;top:429px;width:606px;height:17px;background:#F0F0F0;border-top:1px solid #fff;border-bottom:1px solid #fff;border-left:1px solid #fff"></div>
<div class="a" style="left:614px;top:430px;width:16px;height:16px;background:#F0F0F0;border-right:1px solid #fff;border-bottom:1px solid #fff"></div>
<div class="a" style="left:25px;top:430px;width:231px;height:15px;background:#CDCDCD"></div>
<svg class="a" style="left:0;top:0" width="635" height="473" shape-rendering="crispEdges"><rect x="16" y="434" width="1" height="1" fill="#747474"/><rect x="17" y="434" width="1" height="1" fill="#484848"/><rect x="18" y="434" width="1" height="1" fill="#747474"/><rect x="15" y="435" width="1" height="1" fill="#747474"/><rect x="16" y="435" width="1" height="1" fill="#484848"/><rect x="17" y="435" width="1" height="1" fill="#747474"/><rect x="14" y="436" width="1" height="1" fill="#747474"/><rect x="15" y="436" width="1" height="1" fill="#484848"/><rect x="16" y="436" width="1" height="1" fill="#747474"/><rect x="13" y="437" width="1" height="1" fill="#747474"/><rect x="14" y="437" width="1" height="1" fill="#484848"/><rect x="15" y="437" width="1" height="1" fill="#747474"/><rect x="14" y="438" width="1" height="1" fill="#747474"/><rect x="15" y="438" width="1" height="1" fill="#484848"/><rect x="16" y="438" width="1" height="1" fill="#747474"/><rect x="15" y="439" width="1" height="1" fill="#747474"/><rect x="16" y="439" width="1" height="1" fill="#484848"/><rect x="17" y="439" width="1" height="1" fill="#747474"/><rect x="16" y="440" width="1" height="1" fill="#747474"/><rect x="17" y="440" width="1" height="1" fill="#484848"/><rect x="18" y="440" width="1" height="1" fill="#747474"/><rect x="602" y="434" width="1" height="1" fill="#747474"/><rect x="603" y="434" width="1" height="1" fill="#484848"/><rect x="604" y="434" width="1" height="1" fill="#747474"/><rect x="603" y="435" width="1" height="1" fill="#747474"/><rect x="604" y="435" width="1" height="1" fill="#484848"/><rect x="605" y="435" width="1" height="1" fill="#747474"/><rect x="604" y="436" width="1" height="1" fill="#747474"/><rect x="605" y="436" width="1" height="1" fill="#484848"/><rect x="606" y="436" width="1" height="1" fill="#747474"/><rect x="605" y="437" width="1" height="1" fill="#747474"/><rect x="606" y="437" width="1" height="1" fill="#484848"/><rect x="607" y="437" width="1" height="1" fill="#747474"/><rect x="604" y="438" width="1" height="1" fill="#747474"/><rect x="605" y="438" width="1" height="1" fill="#484848"/><rect x="606" y="438" width="1" height="1" fill="#747474"/><rect x="603" y="439" width="1" height="1" fill="#747474"/><rect x="604" y="439" width="1" height="1" fill="#484848"/><rect x="605" y="439" width="1" height="1" fill="#747474"/><rect x="602" y="440" width="1" height="1" fill="#747474"/><rect x="603" y="440" width="1" height="1" fill="#484848"/><rect x="604" y="440" width="1" height="1" fill="#747474"/><rect x="618" y="89" width="1" height="1" fill="#747474"/><rect x="618" y="90" width="1" height="1" fill="#484848"/><rect x="618" y="91" width="1" height="1" fill="#747474"/><rect x="619" y="88" width="1" height="1" fill="#747474"/><rect x="619" y="89" width="1" height="1" fill="#484848"/><rect x="619" y="90" width="1" height="1" fill="#747474"/><rect x="620" y="87" width="1" height="1" fill="#747474"/><rect x="620" y="88" width="1" height="1" fill="#484848"/><rect x="620" y="89" width="1" height="1" fill="#747474"/><rect x="621" y="86" width="1" height="1" fill="#747474"/><rect x="621" y="87" width="1" height="1" fill="#484848"/><rect x="621" y="88" width="1" height="1" fill="#747474"/><rect x="622" y="87" width="1" height="1" fill="#747474"/><rect x="622" y="88" width="1" height="1" fill="#484848"/><rect x="622" y="89" width="1" height="1" fill="#747474"/><rect x="623" y="88" width="1" height="1" fill="#747474"/><rect x="623" y="89" width="1" height="1" fill="#484848"/><rect x="623" y="90" width="1" height="1" fill="#747474"/><rect x="624" y="89" width="1" height="1" fill="#747474"/><rect x="624" y="90" width="1" height="1" fill="#484848"/><rect x="624" y="91" width="1" height="1" fill="#747474"/><rect x="618" y="418" width="1" height="1" fill="#747474"/><rect x="618" y="419" width="1" height="1" fill="#484848"/><rect x="618" y="420" width="1" height="1" fill="#747474"/><rect x="619" y="419" width="1" height="1" fill="#747474"/><rect x="619" y="420" width="1" height="1" fill="#484848"/><rect x="619" y="421" width="1" height="1" fill="#747474"/><rect x="620" y="420" width="1" height="1" fill="#747474"/><rect x="620" y="421" width="1" height="1" fill="#484848"/><rect x="620" y="422" width="1" height="1" fill="#747474"/><rect x="621" y="421" width="1" height="1" fill="#747474"/><rect x="621" y="422" width="1" height="1" fill="#484848"/><rect x="621" y="423" width="1" height="1" fill="#747474"/><rect x="622" y="420" width="1" height="1" fill="#747474"/><rect x="622" y="421" width="1" height="1" fill="#484848"/><rect x="622" y="422" width="1" height="1" fill="#747474"/><rect x="623" y="419" width="1" height="1" fill="#747474"/><rect x="623" y="420" width="1" height="1" fill="#484848"/><rect x="623" y="421" width="1" height="1" fill="#747474"/><rect x="624" y="418" width="1" height="1" fill="#747474"/><rect x="624" y="419" width="1" height="1" fill="#484848"/><rect x="624" y="420" width="1" height="1" fill="#747474"/><rect x="627" y="461" width="1" height="1" fill="#AEB4BA"/><rect x="628" y="461" width="1" height="1" fill="#AEB4BA"/><rect x="627" y="462" width="1" height="1" fill="#AEB4BA"/><rect x="628" y="462" width="1" height="1" fill="#AEB4BA"/><rect x="624" y="464" width="1" height="1" fill="#AEB4BA"/><rect x="625" y="464" width="1" height="1" fill="#AEB4BA"/><rect x="624" y="465" width="1" height="1" fill="#AEB4BA"/><rect x="625" y="465" width="1" height="1" fill="#AEB4BA"/><rect x="627" y="464" width="1" height="1" fill="#AEB4BA"/><rect x="628" y="464" width="1" height="1" fill="#AEB4BA"/><rect x="627" y="465" width="1" height="1" fill="#AEB4BA"/><rect x="628" y="465" width="1" height="1" fill="#AEB4BA"/><rect x="621" y="467" width="1" height="1" fill="#AEB4BA"/><rect x="622" y="467" width="1" height="1" fill="#AEB4BA"/><rect x="621" y="468" width="1" height="1" fill="#AEB4BA"/><rect x="622" y="468" width="1" height="1" fill="#AEB4BA"/><rect x="624" y="467" width="1" height="1" fill="#AEB4BA"/><rect x="625" y="467" width="1" height="1" fill="#AEB4BA"/><rect x="624" y="468" width="1" height="1" fill="#AEB4BA"/><rect x="625" y="468" width="1" height="1" fill="#AEB4BA"/><rect x="627" y="467" width="1" height="1" fill="#AEB4BA"/><rect x="628" y="467" width="1" height="1" fill="#AEB4BA"/><rect x="627" y="468" width="1" height="1" fill="#AEB4BA"/><rect x="628" y="468" width="1" height="1" fill="#AEB4BA"/></svg>
<div class="a" style="left:7px;top:79px;width:624px;height:368px;border:1px solid #5F5F5F"></div>
<div class="a" style="left:7px;top:447px;width:624px;height:1px;background:#FAFAFA"></div>
<div class="a" style="left:7px;top:448px;width:624px;height:1px;background:#DDDDDD"></div>
<span class="t" style="left:8px;top:452px;transform:scaleX(0.9595);">235 menu items, 1 Selected</span>
<svg width="0" height="0" style="position:absolute">
<defs>
<linearGradient id="gnp" x1="0" y1="0" x2="1" y2="1"><stop offset="0" stop-color="#C4E8F2"/><stop offset="0.5" stop-color="#9CD0E0"/><stop offset="1" stop-color="#78B4C8"/></linearGradient>
<linearGradient id="gdoc" x1="0" y1="0" x2="0" y2="1"><stop offset="0" stop-color="#F4F8FF"/><stop offset="1" stop-color="#C4D4F4"/></linearGradient>
<linearGradient id="gxl" x1="0" y1="0" x2="1" y2="1"><stop offset="0" stop-color="#9ADB6A"/><stop offset="1" stop-color="#1F7A2E"/></linearGradient>
<linearGradient id="gwmp" x1="0" y1="0" x2="0" y2="1"><stop offset="0" stop-color="#D8ECFC"/><stop offset="1" stop-color="#A8D0F4"/></linearGradient>
<linearGradient id="gie" x1="0" y1="0" x2="1" y2="1"><stop offset="0" stop-color="#2E8EE0"/><stop offset="0.45" stop-color="#66CCF4"/><stop offset="1" stop-color="#1E70C8"/></linearGradient>
<pattern id="dith" width="2" height="2" patternUnits="userSpaceOnUse"><rect x="0" y="0" width="1" height="1" fill="#3399FF"/><rect x="1" y="1" width="1" height="1" fill="#3399FF"/></pattern>
<symbol id="i_np" viewBox="0 0 16 16" shape-rendering="crispEdges">
 <rect x="4" y="2" width="12" height="14" fill="#fff"/>
 <rect x="15" y="2" width="1" height="14" fill="#A8884E"/>
 <rect x="4" y="15" width="12" height="1" fill="#A8884E"/>
 <path d="M4 2 H15 V14 H1 Z" fill="url(#gnp)" shape-rendering="auto"/>
 <rect x="3" y="5" width="11" height="1" fill="#C8E8F0" opacity="0.6"/>
 <rect x="3" y="7" width="11" height="1" fill="#C8E8F0" opacity="0.6"/>
 <rect x="2" y="9" width="12" height="1" fill="#C8E8F0" opacity="0.6"/>
 <rect x="2" y="11" width="12" height="1" fill="#C8E8F0" opacity="0.6"/>
 <rect x="3" y="0" width="1" height="1" fill="#8A9096"/><rect x="5" y="0" width="1" height="1" fill="#8A9096"/><rect x="7" y="0" width="1" height="1" fill="#8A9096"/><rect x="9" y="0" width="1" height="1" fill="#8A9096"/><rect x="11" y="0" width="1" height="1" fill="#8A9096"/><rect x="13" y="0" width="1" height="1" fill="#8A9096"/>
 <rect x="4" y="1" width="1" height="1" fill="#1E242A"/><rect x="6" y="1" width="1" height="1" fill="#1E242A"/><rect x="8" y="1" width="1" height="1" fill="#1E242A"/><rect x="10" y="1" width="1" height="1" fill="#1E242A"/><rect x="12" y="1" width="1" height="1" fill="#1E242A"/>
</symbol>
<symbol id="i_doc" viewBox="0 0 16 16">
 <path d="M2.5 0.5 H10.5 L14.5 4.5 V15.5 H2.5 Z" fill="url(#gdoc)" stroke="#7886C8" stroke-width="1"/>
 <path d="M10.5 1 V4.5 H14" fill="#3A96E8" stroke="#3A96E8" stroke-width="1.2"/>
 <path d="M3 15.5 H15 M15 5 V15.5" stroke="#5A68A8" stroke-width="1"/>
</symbol>
<symbol id="i_inf" viewBox="0 0 16 16" shape-rendering="crispEdges"><rect x="1" y="0" width="10" height="1" fill="#606060"/><rect x="11" y="0" width="1" height="1" fill="#C0C0C0"/><rect x="1" y="1" width="1" height="1" fill="#606060"/><rect x="2" y="1" width="9" height="1" fill="#FFFFFF"/><rect x="11" y="1" width="1" height="1" fill="#606060"/><rect x="12" y="1" width="1" height="1" fill="#C0C0C0"/><rect x="1" y="2" width="1" height="1" fill="#606060"/><rect x="2" y="2" width="11" height="1" fill="#FFFFFF"/><rect x="13" y="2" width="1" height="1" fill="#C0C0C0"/><rect x="1" y="3" width="1" height="1" fill="#606060"/><rect x="2" y="3" width="8" height="1" fill="#FFFFFF"/><rect x="10" y="3" width="4" height="1" fill="#000000"/><rect x="1" y="4" width="1" height="1" fill="#606060"/><rect x="2" y="4" width="3" height="1" fill="#FFFFFF"/><rect x="5" y="4" width="2" height="1" fill="#000000"/><rect x="7" y="4" width="6" height="1" fill="#FFFFFF"/><rect x="13" y="4" width="1" height="1" fill="#000000"/><rect x="1" y="5" width="1" height="1" fill="#606060"/><rect x="2" y="5" width="2" height="1" fill="#FFFFFF"/><rect x="4" y="5" width="1" height="1" fill="#000000"/><rect x="5" y="5" width="1" height="1" fill="#E8E800"/><rect x="6" y="5" width="2" height="1" fill="#000000"/><rect x="8" y="5" width="5" height="1" fill="#FFFFFF"/><rect x="13" y="5" width="1" height="1" fill="#000000"/><rect x="1" y="6" width="1" height="1" fill="#606060"/><rect x="2" y="6" width="1" height="1" fill="#FFFFFF"/><rect x="3" y="6" width="1" height="1" fill="#000000"/><rect x="4" y="6" width="2" height="1" fill="#E8E800"/><rect x="6" y="6" width="1" height="1" fill="#000000"/><rect x="7" y="6" width="1" height="1" fill="#FFFFFF"/><rect x="8" y="6" width="1" height="1" fill="#000000"/><rect x="9" y="6" width="4" height="1" fill="#FFFFFF"/><rect x="13" y="6" width="1" height="1" fill="#000000"/><rect x="1" y="7" width="1" height="1" fill="#606060"/><rect x="2" y="7" width="1" height="1" fill="#FFFFFF"/><rect x="3" y="7" width="1" height="1" fill="#000000"/><rect x="4" y="7" width="1" height="1" fill="#E8E800"/><rect x="5" y="7" width="1" height="1" fill="#000000"/><rect x="6" y="7" width="1" height="1" fill="#FFFFFF"/><rect x="7" y="7" width="1" height="1" fill="#000000"/><rect x="8" y="7" width="1" height="1" fill="#FFFFFF"/><rect x="9" y="7" width="1" height="1" fill="#000000"/><rect x="10" y="7" width="3" height="1" fill="#FFFFFF"/><rect x="13" y="7" width="1" height="1" fill="#000000"/><rect x="1" y="8" width="1" height="1" fill="#606060"/><rect x="2" y="8" width="2" height="1" fill="#FFFFFF"/><rect x="4" y="8" width="2" height="1" fill="#000000"/><rect x="6" y="8" width="1" height="1" fill="#FFFFFF"/><rect x="7" y="8" width="1" height="1" fill="#000000"/><rect x="8" y="8" width="2" height="1" fill="#FFFFFF"/><rect x="10" y="8" width="1" height="1" fill="#000000"/><rect x="11" y="8" width="2" height="1" fill="#FFFFFF"/><rect x="13" y="8" width="1" height="1" fill="#000000"/><rect x="1" y="9" width="1" height="1" fill="#606060"/><rect x="2" y="9" width="3" height="1" fill="#FFFFFF"/><rect x="5" y="9" width="2" height="1" fill="#000000"/><rect x="7" y="9" width="1" height="1" fill="#FFFFFF"/><rect x="8" y="9" width="1" height="1" fill="#000000"/><rect x="9" y="9" width="2" height="1" fill="#FFFFFF"/><rect x="11" y="9" width="1" height="1" fill="#000000"/><rect x="12" y="9" width="1" height="1" fill="#FFFFFF"/><rect x="13" y="9" width="1" height="1" fill="#000000"/><rect x="1" y="10" width="1" height="1" fill="#606060"/><rect x="2" y="10" width="4" height="1" fill="#FFFFFF"/><rect x="6" y="10" width="2" height="1" fill="#000000"/><rect x="8" y="10" width="1" height="1" fill="#FFFFFF"/><rect x="9" y="10" width="1" height="1" fill="#000000"/><rect x="10" y="10" width="1" height="1" fill="#FFFFFF"/><rect x="11" y="10" width="1" height="1" fill="#000000"/><rect x="12" y="10" width="1" height="1" fill="#FFFFFF"/><rect x="13" y="10" width="1" height="1" fill="#000000"/><rect x="1" y="11" width="1" height="1" fill="#606060"/><rect x="2" y="11" width="5" height="1" fill="#FFFFFF"/><rect x="7" y="11" width="2" height="1" fill="#000000"/><rect x="9" y="11" width="1" height="1" fill="#FFFFFF"/><rect x="10" y="11" width="1" height="1" fill="#000000"/><rect x="11" y="11" width="2" height="1" fill="#FFFFFF"/><rect x="13" y="11" width="1" height="1" fill="#000000"/><rect x="1" y="12" width="1" height="1" fill="#606060"/><rect x="2" y="12" width="6" height="1" fill="#FFFFFF"/><rect x="8" y="12" width="2" height="1" fill="#000000"/><rect x="10" y="12" width="3" height="1" fill="#FFFFFF"/><rect x="13" y="12" width="1" height="1" fill="#000000"/><rect x="1" y="13" width="1" height="1" fill="#606060"/><rect x="2" y="13" width="11" height="1" fill="#FFFFFF"/><rect x="13" y="13" width="1" height="1" fill="#000000"/><rect x="1" y="14" width="1" height="1" fill="#606060"/><rect x="2" y="14" width="11" height="1" fill="#FFFFFF"/><rect x="13" y="14" width="1" height="1" fill="#000000"/><rect x="1" y="15" width="13" height="1" fill="#000000"/></symbol>
<symbol id="i_ie" viewBox="0 0 16 16">
 <path d="M14.1 8.6 A5.5 5.5 0 1 0 13.3 11.5" fill="none" stroke="#1E74C8" stroke-width="3.4"/>
 <path d="M14.1 8.6 A5.5 5.5 0 1 0 13.3 11.5" fill="none" stroke="#6CCAF2" stroke-width="1.8"/>
 <path d="M3.0 8.6 H14.6" stroke="#1E74C8" stroke-width="2.4"/>
 <path d="M4.6 8.6 H13.2" stroke="#58B8EC" stroke-width="1"/>
 <path d="M1.8 14.8 C0.6 12.5 3.5 7.5 7.5 4.5 C11 2 14.6 0.6 15.4 1.8 C15.8 2.5 15.5 3.6 15 4.6" fill="none" stroke="#F6BC10" stroke-width="1.7"/>
 <path d="M1.8 14.8 C2.6 15.6 4 15.4 5.2 14.8" fill="none" stroke="#F0A000" stroke-width="1.4"/>
</symbol>
<symbol id="i_xl" viewBox="0 0 16 16">
 <path d="M2.5 0.5 H15.5 V15.5 H0.5 V2.5 Z" fill="#fff" stroke="#2E8B3A" stroke-width="1"/>
 <path d="M2.5 1.5 H14.5 V14.5 H1.5 V2.5 Z" fill="#EEF6EC" stroke="#C0E0B8" stroke-width="0.6"/>
 <path d="M9 3 H12.6 L6.6 13 H3 Z" fill="#1E6E30"/>
 <path d="M6.6 8 L3 13 H6.6 L8.4 10 Z" fill="#3E9A38"/>
 <path d="M3.4 3 H7 L13 13 H9.4 Z" fill="#80D058"/>
</symbol>
<symbol id="i_wmp" viewBox="0 0 16 16">
 <rect x="0.5" y="0.5" width="15" height="15" rx="0.8" fill="url(#gwmp)" stroke="#3C8AD6" stroke-width="1"/>
 <rect x="1.5" y="1.5" width="13" height="13" fill="none" stroke="#A4CCF0" stroke-width="0.8"/>
 <circle cx="8" cy="8" r="5.7" fill="#FA8410"/>
 <circle cx="8" cy="8" r="5.6" fill="none" stroke="#F07000" stroke-width="0.6"/>
 <path d="M5.8 4 L11.4 8 L5.8 12 Z" fill="#fff"/>
</symbol>
</defs></svg>
</body></html>
